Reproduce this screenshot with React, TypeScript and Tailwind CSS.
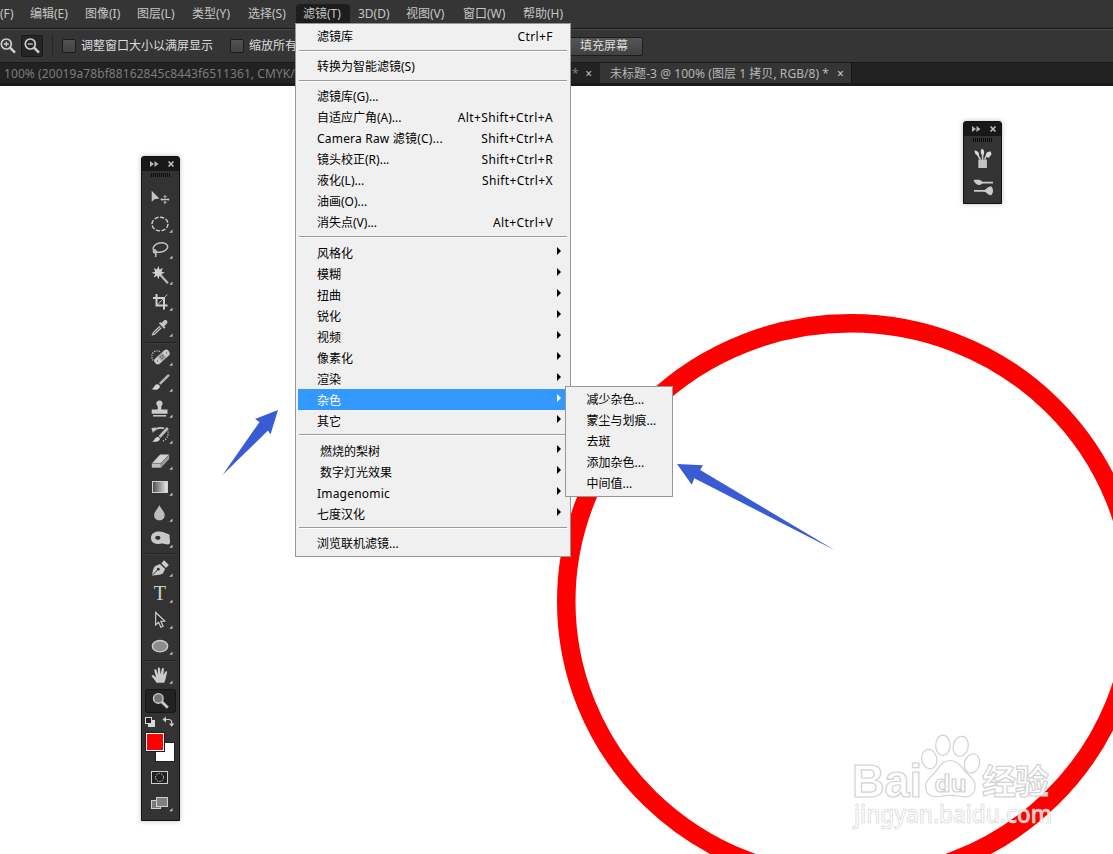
import type { ReactNode } from "react";
import clsx from "clsx";

type MenuEntry = {
  label?: string;
  shortcut?: string;
  sub?: boolean;
  active?: boolean;
  className?: string;
};

const menuBar = [
  { label: "(F)", cell: "w-[30px]" },
  { label: "编辑(E)", cell: "w-[55px]" },
  { label: "图像(I)", cell: "w-[52px]" },
  { label: "图层(L)", cell: "w-[55px]" },
  { label: "类型(Y)", cell: "w-[56px]" },
  { label: "选择(S)", cell: "w-[48px]" },
  { label: "滤镜(T)", cell: "w-[54px] pl-[7px] bg-[#1d1d1d] rounded-t" },
  { label: "3D(D)", cell: "w-[56px] pl-2" },
  { label: "视图(V)", cell: "w-[57px]" },
  { label: "窗口(W)", cell: "w-[60px]" },
  { label: "帮助(H)", cell: "w-[60px]" },
];

// entries without a label are separators
const filterMenu: MenuEntry[] = [
  { label: "滤镜库", shortcut: "Ctrl+F" },
  {},
  { label: "转换为智能滤镜(S)" },
  {},
  { label: "滤镜库(G)..." },
  { label: "自适应广角(A)...", shortcut: "Alt+Shift+Ctrl+A" },
  { label: "Camera Raw 滤镜(C)...", shortcut: "Shift+Ctrl+A", className: "tracking-[0.2px]" },
  { label: "镜头校正(R)...", shortcut: "Shift+Ctrl+R" },
  { label: "液化(L)...", shortcut: "Shift+Ctrl+X" },
  { label: "油画(O)..." },
  { label: "消失点(V)...", shortcut: "Alt+Ctrl+V" },
  {},
  { label: "风格化", sub: true },
  { label: "模糊", sub: true },
  { label: "扭曲", sub: true },
  { label: "锐化", sub: true },
  { label: "视频", sub: true },
  { label: "像素化", sub: true },
  { label: "渲染", sub: true },
  { label: "杂色", sub: true, active: true },
  { label: "其它", sub: true },
  {},
  { label: "燃烧的梨树", sub: true, className: "pl-[3px]" },
  { label: "数字灯光效果", sub: true, className: "pl-[3px]" },
  { label: "Imagenomic", sub: true, className: "tracking-[0.2px]" },
  { label: "七度汉化", sub: true },
  {},
  { label: "浏览联机滤镜..." },
];

const noiseMenu = ["减少杂色...", "蒙尘与划痕...", "去斑", "添加杂色...", "中间值..."];

const burst = Array.from({ length: 16 }, (_, i) => {
  const r = i % 2 ? 3.4 : 6.6;
  const a = (i * Math.PI) / 8;
  return `${(17.3 + r * Math.cos(a)).toFixed(1)},${(9.7 + r * Math.sin(a)).toFixed(1)}`;
}).join(" ");

const toolGroups: { name: string; icon: ReactNode; single?: boolean; active?: boolean }[][] = [
  [
    {
      name: "move",
      single: true,
      icon: (
        <>
          <path d="M10.7 5.7v11l2.8-2.4 4.9-.8z" fill="#c4c4c4" />
          <path
            d="M20 14.5h8M24 10.500v8M22.600 12l1.400-1.400 1.400 1.400M22.600 17l1.400 1.400 1.400-1.400M21.400 13.100L20 14.500l1.400 1.400M26.600 13.100l1.400 1.400-1.400 1.400"
            stroke="#c4c4c4"
            fill="none"
          />
        </>
      ),
    },
    {
      name: "marquee",
      icon: (
        <ellipse cx="19" cy="13" rx="8" ry="6.8" fill="none" stroke="#cfcfcf" strokeWidth="1.4" strokeDasharray="4.2 1.6" />
      ),
    },
    {
      name: "lasso",
      icon: (
        <g fill="none" stroke="#c4c4c4" strokeWidth="1.5">
          <ellipse cx="19.4" cy="10.6" rx="7.4" ry="4.6" transform="rotate(-12 19.4 10.6)" />
          <path d="M15 13c-2.400-.6-3.400 2-1.600 2.800 1.500.6 2.600-.7 1.600-2.200M14 16c1.400 1 1.200 2.400.4 4" />
        </g>
      ),
    },
    {
      name: "wand",
      icon: (
        <>
          <polygon points={burst} fill="#d0d0d0" />
          <path d="M19.500 12l7.400 8.300" stroke="#b8b8b8" strokeWidth="2.300" />
        </>
      ),
    },
    {
      name: "crop",
      icon: (
        <g fill="none" stroke="#cfcfcf" strokeWidth="2">
          <path d="M15.500 5v11.500h11M12 9h11v11.500" />
          <path d="M16 16.300L26.300 5.500" strokeWidth="0.900" />
        </g>
      ),
    },
    {
      name: "eyedropper",
      icon: (
        <>
          <path d="M19 11.200l-6.600 6.300-.8 2.300 2.300-.8 6.500-6.400" fill="none" stroke="#cfcfcf" strokeWidth="1.200" />
          <path d="M18 8.500l5.300 5.200 1.200-1.200-1.200-1.300 2.700-2.700c1.600-2-1-4.500-3-3l-2.700 2.600-1.200-1z" fill="#c4c4c4" />
        </>
      ),
    },
  ],
  [
    {
      name: "healing",
      icon: (
        <>
          <path d="M19 7.500c-5-2.500-9 2-8 6 .3 2 1.500 3.300 3 4" fill="none" stroke="#cfcfcf" strokeWidth="1.200" strokeDasharray="1.200 1.200" />
          <rect x="12" y="9.600" width="18" height="6.800" rx="3.200" transform="rotate(-42 21 13)" fill="#c9c9c9" />
          <rect x="18" y="10" width="6" height="6" transform="rotate(-42 21 13)" fill="#a3a3a3" />
          <path d="M19.600 13h.1M22.300 13h.1M21 11.500h.1M21 14.500h.1M25.500 9h.1M16.500 17h.1" stroke="#444" strokeLinecap="square" />
        </>
      ),
    },
    {
      name: "brush",
      icon: (
        <>
          <path d="M18.800 13.800L28 4.800" stroke="#b5b5b5" strokeWidth="2.500" />
          <path d="M10.200 19c3-.4 2.500-3.400 5-4.600 2-.8 4.300 1 3.600 2.800-1 2.600-5.600 3.300-8.600 1.800z" fill="#d4d4d4" />
        </>
      ),
    },
    {
      name: "stamp",
      icon: (
        <>
          <path d="M18.500 4.600c2 0 3.100 1.400 3.100 2.900 0 1.300-1.200 2-1.300 3.200V13.500h6.200v4.200H10.700v-4.200h6v-2.800c-.1-1.200-1.400-1.900-1.400-3.200 0-1.500 1.200-2.900 3.200-2.900z" fill="#cbcbcb" />
          <path d="M12 19.800h13.200" stroke="#cbcbcb" strokeWidth="1.500" />
        </>
      ),
    },
    {
      name: "history",
      icon: (
        <>
          <path d="M12 9.200c3-3.200 7-3.800 11-2.800" fill="none" stroke="#c4c4c4" strokeWidth="1.700" />
          <path d="M15.200 5.600l-4.800.4 1.500 5z" fill="#c4c4c4" />
          <path d="M18.500 15L26.800 6" stroke="#bdbdbd" strokeWidth="2.700" />
          <path d="M11 19.200c2.400-.2 2.500-3 4.600-4 1.900-.8 3.700.7 3.200 2.200-.9 2.300-5.200 3.200-7.800 1.800z" fill="#d4d4d4" />
          <path d="M27 9.500c.8 4-1.600 8.500-5.800 10" fill="none" stroke="#cfcfcf" strokeWidth="1.200" strokeDasharray="1.200 1.400" />
        </>
      ),
    },
    {
      name: "eraser",
      icon: (
        <>
          <path d="M10.800 15.400L19.200 6.500h9L20 15.400z" fill="#d3d3d3" />
          <path d="M10.800 15.400H20v4.300h-9.200z" fill="#c0c0c0" />
          <path d="M20 15.400l8.200-8.900v4.400L20 19.700z" fill="#9a9a9a" />
          <path d="M10.800 15.400H20l8.200-8.900M20 15.400v4.300" fill="none" stroke="#666" strokeWidth="0.600" />
        </>
      ),
    },
    {
      name: "gradient",
      icon: (
        <>
          <defs>
            <linearGradient id="ramp">
              <stop offset="0" stopColor="#4a4a4a" />
              <stop offset="1" stopColor="#ededed" />
            </linearGradient>
          </defs>
          <rect x="11.500" y="7.500" width="15" height="11" fill="url(#ramp)" stroke="#d0d0d0" />
        </>
      ),
    },
    {
      name: "blur",
      icon: <path d="M18.400 5c1.200 3.500 5.300 6.500 5.300 10.200 0 3-2.300 5-5.300 5s-5.300-2-5.300-5c0-3.700 4.100-6.700 5.300-10.200z" fill="#bdbdbd" />,
    },
    {
      name: "sponge",
      icon: (
        <path
          fillRule="evenodd"
          d="M10 12c0-4.400 3.700-6.700 8.200-6.500 4 0 6.200 1.900 9.700 2.800 1.400.9.300 2.700.8 4.300.4 2.300.9 5-.8 5.700-3 .6-4.800-1.200-6.900-.8-5.700 1.400-11-.3-11-5.500zm4.200-.3c0 1.300 1.300 2.100 2.700 2.100s2.500-.8 2.500-2.100-1.100-2-2.500-2-2.700.7-2.700 2z"
          fill="#c9c9c9"
        />
      ),
    },
  ],
  [
    {
      name: "pen",
      icon: (
        <>
          <path d="M10.700 20.800c1-3.500 1.200-7.500 3.200-9.600l5-2.200 5.200 5-2.200 4.600c-2.800 1.600-7.500 1.500-11.200 2.200z" fill="#cbcbcb" />
          <path d="M20.300 8.200l2.800-3 4.700 4.800-2.800 2.900z" fill="#cbcbcb" />
          <path d="M11 20.500l5.700-5.700" stroke="#333" />
          <circle cx="17.300" cy="14.200" r="1.400" fill="#333" />
        </>
      ),
    },
    {
      name: "type",
      icon: (
        <text x="18.900" y="19" textAnchor="middle" className="font-['Liberation_Serif',serif] text-[20px]" fill="#d0d0d0">
          T
        </text>
      ),
    },
    {
      name: "path",
      icon: <path d="M14.700 5.500v12.300l2.900-2.600 2.300 5 2.200-1-2.300-4.900 3.900-.3z" fill="#2a2a2a" stroke="#cfcfcf" strokeWidth="1.200" />,
    },
    {
      name: "ellipse",
      icon: <ellipse cx="19" cy="13.200" rx="7.600" ry="5.700" fill="#8d8d8d" stroke="#cdcdcd" strokeWidth="1.400" />,
    },
  ],
  [
    {
      name: "hand",
      icon: (
        <path
          d="M15.400 20.800c-1-2.400-3-4-4.600-6.500-.5-1.400 1-1.900 2-.9l2.300 2-1.800-6.800c-.2-1.500 1.600-1.900 2.100-.5l1.700 4.700-.3-6.200c.1-1.500 2-1.500 2.200 0l.6 6 1.200-5.600c.4-1.400 2.200-1.100 2.100.3l-.4 6 1.800-3.500c.7-1.200 2.200-.6 1.800.8-1 3.600-1.300 7-2.900 10.200z"
          fill="#cbcbcb"
        />
      ),
    },
    {
      name: "zoom",
      single: true,
      active: true,
      icon: (
        <>
          <path d="M21 14l5.800 5.800" stroke="#c9c9c9" strokeWidth="2.800" />
          <circle cx="17.300" cy="10.400" r="4.800" fill="#777" stroke="#c9c9c9" strokeWidth="1.400" />
        </>
      ),
    },
  ],
];

function Magnifier({ sign }: { sign: "+" | "-" }) {
  return (
    <svg viewBox="0 0 16 16" className="size-4" fill="none" stroke="#cfcfcf">
      <circle cx="6.300" cy="6" r="5" strokeWidth="1.700" />
      <path d="M10 9.700l5 5" strokeWidth="2.500" />
      <path d={sign === "+" ? "M3.800 6h5M6.300 3.500v5" : "M3.800 6h5"} strokeWidth="1.300" />
    </svg>
  );
}

function Checkbox() {
  return <span className="size-[14px] rounded-[2px] border border-[#1c1c1c] bg-linear-to-b from-[#525252] to-[#434343]" />;
}

function Separator() {
  return (
    <div className="h-[9px] px-[3px] pt-[3px]">
      <div className="h-[2px] border-t border-[#9a9a9a] bg-white" />
    </div>
  );
}

function FilterRow({ entry }: { entry: MenuEntry }) {
  if (!entry.label) return <Separator />;
  return (
    <div
      className={clsx(
        "mx-[2px] flex h-[21px] items-center justify-between pl-[19px]",
        entry.active && "bg-[#3399ff] text-white",
      )}
    >
      <span className={clsx(entry.sub && "pt-[2px]", entry.className)}>{entry.label}</span>
      {entry.shortcut && <span className="mr-[15px] tracking-[0.4px]">{entry.shortcut}</span>}
      {entry.sub && (
        <svg viewBox="0 0 4 8" className="mr-[7px] mb-[4px] h-[8px] w-[4px]" fill="currentColor">
          <path d="M0 0l4 4-4 4z" />
        </svg>
      )}
    </div>
  );
}

function PanelHeader() {
  return (
    <>
      <div className="flex h-[14px] items-center justify-between bg-[#181818] px-[8px]">
        <svg viewBox="0 0 9 6" className="h-[6px] w-[9px]" fill="#b5b5b5">
          <path d="M0 0l4 3-4 3zM4.500 0l4 3-4 3z" />
        </svg>
        <svg viewBox="0 0 6 6" className="mr-[-3px] h-[6px] w-[6px]" stroke="#c5c5c5" strokeWidth="1.500">
          <path d="M.5.5l5 5M5.500.5l-5 5" />
        </svg>
      </div>
      <div className="mx-auto mt-[2px] h-[4px] w-[20px] bg-[repeating-linear-gradient(90deg,#0c0c0c_0_1px,#333_1px_2px)]" />
    </>
  );
}

function Toolbox() {
  return (
    <div className="absolute top-[156px] left-[141px] flex h-[665px] w-[39px] flex-col overflow-hidden rounded-t-[3px] border border-[#111] bg-[#333] shadow-[0_0_5px_rgba(0,0,0,0.25)]">
      <PanelHeader />
      <div className="mt-[8px] flex flex-col">
        {toolGroups.map((group, i) => (
          <div key={i} className={clsx(i > 0 && "pt-[3px]")}>
            {i > 0 && <div className="mx-[3px] -mt-[2px] h-[2px] border-t border-[#232323] bg-[#3c3c3c]" />}
            {group.map((tool) => (
              <div key={tool.name} className="h-[26px]">
                <svg viewBox="1 0 37 26" className="h-[26px] w-[37px]">
                  {tool.active && <rect x="4.500" y="1.500" width="30" height="23" rx="2" fill="#222" stroke="#151515" />}
                  {tool.icon}
                  {!tool.single && <path d="M31.500 18.500v3.200h-3.200z" fill="#c4c4c4" />}
                </svg>
              </div>
            ))}
          </div>
        ))}
      </div>
      <svg viewBox="1 0 37 106" className="h-[106px] w-[37px]">
        <rect x="7" y="6" width="7" height="7" fill="#d8d8d8" />
        <rect x="4.500" y="3.500" width="6" height="6" fill="#222" stroke="#d8d8d8" />
        <path d="M24 5.500h3.500c2.200 0 3.200 1 3.200 3V11" fill="none" stroke="#cfcfcf" strokeWidth="1.200" />
        <path d="M25 2.500v6l-3.500-3zM28 9.500h5.400l-2.700 3.200z" fill="#cfcfcf" />
        <rect x="14.500" y="28.500" width="19" height="19" fill="#fff" stroke="#222" />
        <rect x="5.500" y="19.500" width="17" height="17" fill="#fe0000" stroke="#fff" />
        <rect x="4.500" y="18.500" width="19" height="19" fill="none" stroke="#1c1c1c" />
        <rect x="10.500" y="57.500" width="16" height="12" fill="#222" stroke="#cfcfcf" />
        <circle cx="18.500" cy="63.500" r="4" fill="none" stroke="#e0e0e0" strokeDasharray="1.300 1.200" />
        <rect x="10.500" y="86.500" width="9" height="8" fill="#777" stroke="#cfcfcf" />
        <rect x="15.500" y="83.500" width="11" height="9" fill="#808080" stroke="#cfcfcf" />
        <path d="M31.500 94v3.200h-3.200z" fill="#c4c4c4" />
      </svg>
    </div>
  );
}

function BrushPanel() {
  return (
    <div className="absolute top-[121px] left-[963px] h-[83px] w-[39px] overflow-hidden rounded-t-[3px] border border-[#111] bg-[#333] shadow-[0_0_5px_rgba(0,0,0,0.25)]">
      <PanelHeader />
      <svg viewBox="1 21 37 60" className="h-[60px] w-[37px]">
        <path d="M15.300 38.500h8.600v8.600h-8.600z" fill="#c4c4c4" />
        <path d="M17.500 38.500l-3-5M19.600 38.500v-6M21.500 38.500l2.500-5" stroke="#c9c9c9" strokeWidth="1.500" />
        <path d="M11.700 29.200c2.900.5 4.800 2.600 4.300 5.500-2.600 0-4.700-2.300-4.300-5.500zM19 27.500c2.600 1.800 2.900 4.600 1 7.300-2.600-1.700-2.900-4.700-1-7.300zM22.700 34c.4-2.300 2.300-3.500 5.200-3.400l.6 2.900-2.700 3.200c-1.800 0-2.900-1-3.100-2.700z" fill="#d8d8d8" />
        <path d="M19 61.700h11M11 69.800h12" stroke="#c9c9c9" strokeWidth="1.700" />
        <path d="M10.500 59c3 0 7-1.400 9.500 2.600-2 3.800-7.500 3-9.500-2.600zM20 69.700c2.500-.6 4.500-4 8-4.500 2.700 2 2.700 7.200 0 9-3.500-.5-5.500-3.900-8-4.500z" fill="#cbcbcb" />
      </svg>
    </div>
  );
}

function Watermark() {
  const toes = [
    [929.3, 759, 7.5, 9.8, -12],
    [942.9, 745.4, 7.2, 10.2, 0],
    [960.7, 746.4, 7.5, 10.2, 12],
    [972, 763.5, 7.5, 9.8, 15],
  ];
  return (
    <g fill="#fff" fillOpacity="0.8" stroke="#d2d2d2" strokeWidth="1.200">
      {toes.map(([cx, cy, rx, ry, tilt]) => (
        <ellipse key={cx} cx={cx} cy={cy} rx={rx} ry={ry} transform={`rotate(${tilt} ${cx} ${cy})`} />
      ))}
      <path d="M950 760.500c9 0 12 8 17 13 6 5 9 8 8 15-1 7-8 9.500-14 8-8-1.500-14-1.500-22 0-6 1-12-1-13.300-8-1-7 3.300-10 8.300-15 5-5 7-13 16-13z" />
      <g className="font-['Liberation_Sans',sans-serif] font-bold">
        <text x="852" y="797" textLength="70" lengthAdjust="spacingAndGlyphs" className="text-[46px]">Bai</text>
        <text x="934.500" y="792" textLength="32" lengthAdjust="spacingAndGlyphs" className="text-[24px]">du</text>
      </g>
      <text x="982" y="794" textLength="67" className="font-['Noto_Sans_CJK_SC',sans-serif] text-[34px] font-bold">经验</text>
      <text x="854" y="823" textLength="198" lengthAdjust="spacingAndGlyphs" strokeWidth="0.700" className="font-['Noto_Sans',sans-serif] text-[25px] font-medium">
        jingyan.baidu.com
      </text>
    </g>
  );
}

export default function App() {
  return (
    <div className="relative flex h-[854px] w-[1113px] flex-col overflow-hidden bg-white font-['Noto_Sans','Noto_Sans_CJK_SC',sans-serif] text-[12px] leading-none whitespace-pre text-black">
      <nav className="flex h-[29px] shrink-0 items-start border-b border-[#1a1a1a] bg-[#353535] pt-[4px] text-[#c6c6c6]">
        {menuBar.map((item) => (
          <span key={item.label} className={clsx("flex h-[20px] shrink-0 items-center", item.cell)}>
            {item.label}
          </span>
        ))}
      </nav>

      <div className="flex h-[34px] shrink-0 items-center border-y border-t-[#484848] border-b-[#1a1a1a] bg-[#353535] text-[#dcdcdc]">
        <Magnifier sign="+" />
        <span className="ml-[5px] flex size-[22px] items-center justify-center rounded-[2px] border border-[#191919] bg-[#252525]">
          <Magnifier sign="-" />
        </span>
        <span className="mr-[9px] ml-[9px] h-[22px] w-px bg-[#252525]" />
        <Checkbox />
        <span className="ml-[5px] w-[149px]">调整窗口大小以满屏显示</span>
        <Checkbox />
        <span className="ml-[5px] w-[314px]">缩放所有窗口</span>
        <span className="flex h-[19px] w-[80px] items-center rounded-[2px] border border-[#1d1d1d] bg-linear-to-b from-[#555] to-[#414141] pl-[16px]">
          填充屏幕
        </span>
      </div>

      <div className="flex h-[23px] shrink-0 items-stretch border-b-[3px] border-[#1a1a1a] bg-[#222] text-[#7c7c7c]">
        <span className="flex w-[572px] items-center pt-[2px] pl-[4px] tracking-[0.08px]">
          100% (20019a78bf88162845c8443f6511361, CMYK/8)
        </span>
        <span className="flex w-[28px] items-center justify-between pt-[2px] pr-[8px]">
          *<span className="text-[#c0c0c0]">×</span>
        </span>
        <span className="flex w-[252px] items-center justify-between border-r border-[#191919] bg-[#353535] pt-[2px] pr-[7px] pl-[10px] tracking-[0.06px] text-[#b6b6b6]">
          未标题-3 @ 100% (图层 1 拷贝, RGB/8) *<span className="text-[#d0d0d0]">×</span>
        </span>
      </div>

      <main className="flex-1 bg-white" />

      <svg viewBox="0 86 1113 768" className="absolute top-[86px] left-0 h-[768px] w-[1113px]">
        <ellipse cx="850.500" cy="601.500" rx="284.250" ry="278.250" fill="none" stroke="#fe0000" strokeWidth="18.500" />
        <g fill="#395bd4">
          <path d="M278 410l-7.500 24.500-2.500-4L222.500 475l37-53-4.500-3z" />
          <path d="M677 464l26 1.200-2.800 4.800L834.500 550l-140.200-71.700-2.500 6.500z" />
        </g>
        <Watermark />
      </svg>

      <Toolbox />
      <BrushPanel />

      <div className="absolute top-[23px] left-[295px] h-[534px] w-[276px] border border-[#979797] bg-[#f0f0f0] pt-[2px]">
        {filterMenu.map((entry, i) => (
          <FilterRow key={i} entry={entry} />
        ))}
      </div>

      <div className="absolute top-[386px] left-[565px] h-[111px] w-[108px] border border-[#979797] bg-[#f0f0f0] pt-[2px]">
        {noiseMenu.map((label) => (
          <div key={label} className="flex h-[21px] items-center pl-[20.5px]">
            {label}
          </div>
        ))}
      </div>
    </div>
  );
}
